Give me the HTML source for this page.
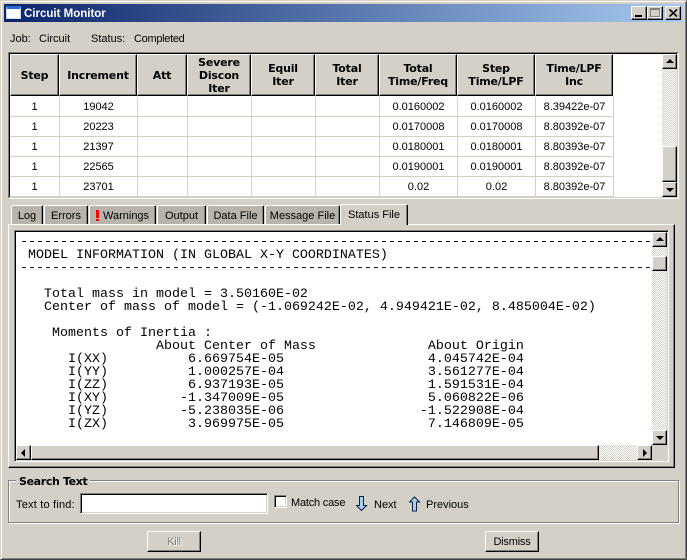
<!DOCTYPE html>
<html><head><meta charset="utf-8"><style>
html,body{margin:0;padding:0;background:#d4d0c8}
#w{position:relative;width:687px;height:560px;overflow:hidden;background:#d4d0c8;font:11px "Liberation Sans",sans-serif;color:#000}
#w div,#w span.a{position:absolute;box-sizing:border-box}
.t{white-space:nowrap;line-height:13px}
.btn{background:#d4d0c8;border-top:1px solid #fff;border-left:1px solid #fff;border-right:1px solid #000;border-bottom:1px solid #000;box-shadow:inset -1px -1px 0 #808080}
.dither{background:repeating-conic-gradient(#d4d0c8 0 25%,#fff 0 50%) 0 0/2px 2px}
.hc{background:#d4d0c8;border-top:1px solid #fff;border-left:1px solid #fff;border-right:1px solid #000;border-bottom:1px solid #000;box-shadow:inset -1px -1px 0 #808080;font:bold 11px/13px "DejaVu Sans",sans-serif;text-align:center;display:flex;align-items:center;justify-content:center;letter-spacing:-.2px}
.cell{background:#fff;border-right:1px solid #d4d0c8;border-bottom:1px solid #d4d0c8;text-align:center;line-height:21px;font-size:11px}
.tab{background:#b8b4ac;border-top:1px solid #fff;border-left:1px solid #fff;border-right:1px solid #000;box-shadow:inset -1px 0 0 #808080;border-radius:2px 2px 0 0;text-align:center;line-height:21px;font-size:11px;white-space:nowrap}
pre{position:absolute;margin:0;left:20px;top:236px;font:13.33px/13px "Liberation Mono",monospace;color:#000;white-space:pre}
.up:after,.dn:after,.lf:after,.rt:after{content:"";position:absolute;width:0;height:0}
.up:after{left:3px;top:4px;border:4px solid transparent;border-top:0;border-bottom:4px solid #000}
.dn:after{left:3px;top:5px;border:4px solid transparent;border-bottom:0;border-top:4px solid #000}
.lf:after{left:4px;top:3px;border:4px solid transparent;border-left:0;border-right:4px solid #000}
.rt:after{left:5px;top:3px;border:4px solid transparent;border-right:0;border-left:4px solid #000}
</style></head><body><div id="w">
<!-- window frame -->
<div style="left:0;top:0;width:687px;height:560px;border-top:1px solid #d4d0c8;border-left:1px solid #d4d0c8;border-right:1px solid #404040;border-bottom:1px solid #404040;box-shadow:inset 1px 1px 0 #fff,inset -1px -1px 0 #808080"></div>
<!-- title bar -->
<div style="left:4px;top:4px;width:679px;height:18px;background:linear-gradient(90deg,#0a246a,#a6caf0)"></div>
<div style="left:6px;top:6px;width:15px;height:13px;background:#fff;border:1px solid #c8d8f0;border-top:3px solid #2a6ad0"></div>
<div class="t" style="left:24px;top:7px;color:#fff;font:bold 11.5px/14px 'Liberation Sans',sans-serif">Circuit Monitor</div>
<div class="btn" style="left:631px;top:6px;width:16px;height:14px"><div style="left:3px;top:8px;width:7px;height:2px;background:#000"></div></div>
<div class="btn" style="left:647px;top:6px;width:16px;height:14px"><div style="left:2px;top:1px;width:10px;height:9px;border:1px solid #808080;border-top:2px solid #808080;box-shadow:1px 1px 0 #fff"></div></div>
<div class="btn" style="left:665px;top:6px;width:16px;height:14px"><svg style="position:absolute;left:3px;top:2px" width="9" height="8"><path d="M0.5 0.5L8 7.5M8 0.5L0.5 7.5" stroke="#000" stroke-width="1.6" fill="none"/></svg></div>
<!-- job line -->
<div class="t" style="left:10px;top:33px">Job:</div>
<div class="t" style="left:39px;top:33px">Circuit</div>
<div class="t" style="left:91px;top:33px">Status:</div>
<div class="t" style="left:134px;top:33px;letter-spacing:-.3px">Completed</div>
<!-- table frame -->
<div style="left:8px;top:52px;width:671px;height:147px;background:#fff;border-top:1px solid #808080;border-left:1px solid #808080;border-right:1px solid #fff;border-bottom:1px solid #fff;box-shadow:inset -1px -1px 0 #d4d0c8,inset 1px 1px 0 #000"></div>
<div class="hc" style="left:10px;top:54px;width:49px;height:42px">Step</div>
<div class="hc" style="left:59px;top:54px;width:78px;height:42px">Increment</div>
<div class="hc" style="left:137px;top:54px;width:50px;height:42px">Att</div>
<div class="hc" style="left:187px;top:54px;width:64px;height:42px">Severe<br>Discon<br>Iter</div>
<div class="hc" style="left:251px;top:54px;width:64px;height:42px">Equil<br>Iter</div>
<div class="hc" style="left:315px;top:54px;width:64px;height:42px">Total<br>Iter</div>
<div class="hc" style="left:379px;top:54px;width:78px;height:42px">Total<br>Time/Freq</div>
<div class="hc" style="left:457px;top:54px;width:78px;height:42px">Step<br>Time/LPF</div>
<div class="hc" style="left:535px;top:54px;width:78px;height:42px">Time/LPF<br>Inc</div>
<!-- rows -->
<div class="cell" style="left:10px;top:97px;width:50px;height:20px">1</div><div class="cell" style="left:60px;top:97px;width:78px;height:20px">19042</div><div class="cell" style="left:138px;top:97px;width:50px;height:20px"></div><div class="cell" style="left:188px;top:97px;width:64px;height:20px"></div><div class="cell" style="left:252px;top:97px;width:64px;height:20px"></div><div class="cell" style="left:316px;top:97px;width:64px;height:20px"></div><div class="cell" style="left:380px;top:97px;width:78px;height:20px">0.0160002</div><div class="cell" style="left:458px;top:97px;width:78px;height:20px">0.0160002</div><div class="cell" style="left:536px;top:97px;width:78px;height:20px">8.39422e-07</div>
<div class="cell" style="left:10px;top:117px;width:50px;height:20px">1</div><div class="cell" style="left:60px;top:117px;width:78px;height:20px">20223</div><div class="cell" style="left:138px;top:117px;width:50px;height:20px"></div><div class="cell" style="left:188px;top:117px;width:64px;height:20px"></div><div class="cell" style="left:252px;top:117px;width:64px;height:20px"></div><div class="cell" style="left:316px;top:117px;width:64px;height:20px"></div><div class="cell" style="left:380px;top:117px;width:78px;height:20px">0.0170008</div><div class="cell" style="left:458px;top:117px;width:78px;height:20px">0.0170008</div><div class="cell" style="left:536px;top:117px;width:78px;height:20px">8.80392e-07</div>
<div class="cell" style="left:10px;top:137px;width:50px;height:20px">1</div><div class="cell" style="left:60px;top:137px;width:78px;height:20px">21397</div><div class="cell" style="left:138px;top:137px;width:50px;height:20px"></div><div class="cell" style="left:188px;top:137px;width:64px;height:20px"></div><div class="cell" style="left:252px;top:137px;width:64px;height:20px"></div><div class="cell" style="left:316px;top:137px;width:64px;height:20px"></div><div class="cell" style="left:380px;top:137px;width:78px;height:20px">0.0180001</div><div class="cell" style="left:458px;top:137px;width:78px;height:20px">0.0180001</div><div class="cell" style="left:536px;top:137px;width:78px;height:20px">8.80393e-07</div>
<div class="cell" style="left:10px;top:157px;width:50px;height:20px">1</div><div class="cell" style="left:60px;top:157px;width:78px;height:20px">22565</div><div class="cell" style="left:138px;top:157px;width:50px;height:20px"></div><div class="cell" style="left:188px;top:157px;width:64px;height:20px"></div><div class="cell" style="left:252px;top:157px;width:64px;height:20px"></div><div class="cell" style="left:316px;top:157px;width:64px;height:20px"></div><div class="cell" style="left:380px;top:157px;width:78px;height:20px">0.0190001</div><div class="cell" style="left:458px;top:157px;width:78px;height:20px">0.0190001</div><div class="cell" style="left:536px;top:157px;width:78px;height:20px">8.80392e-07</div>
<div class="cell" style="left:10px;top:177px;width:50px;height:20px">1</div><div class="cell" style="left:60px;top:177px;width:78px;height:20px">23701</div><div class="cell" style="left:138px;top:177px;width:50px;height:20px"></div><div class="cell" style="left:188px;top:177px;width:64px;height:20px"></div><div class="cell" style="left:252px;top:177px;width:64px;height:20px"></div><div class="cell" style="left:316px;top:177px;width:64px;height:20px"></div><div class="cell" style="left:380px;top:177px;width:78px;height:20px">0.02</div><div class="cell" style="left:458px;top:177px;width:78px;height:20px">0.02</div><div class="cell" style="left:536px;top:177px;width:78px;height:20px">8.80392e-07</div>
<!-- table scrollbar -->
<div class="dither" style="left:662px;top:54px;width:15px;height:143px"></div>
<div class="btn up" style="left:662px;top:54px;width:15px;height:15px"></div>
<div class="btn" style="left:662px;top:146px;width:15px;height:36px"></div>
<div class="btn dn" style="left:662px;top:182px;width:15px;height:15px"></div>
<!-- tab panel -->
<div style="left:8px;top:224px;width:667px;height:244px;background:#d4d0c8;border-top:1px solid #fff;border-left:1px solid #fff;border-right:1px solid #000;border-bottom:1px solid #000;box-shadow:inset -1px -1px 0 #808080"></div>
<div class="tab" style="left:11px;top:205px;width:32px;height:19px">Log</div>
<div class="tab" style="left:44px;top:205px;width:44px;height:19px">Errors</div>
<div class="tab" style="left:89px;top:205px;width:67px;height:19px;text-align:left;padding-left:13px">Warnings<div style="left:6px;top:4px;width:3px;height:8px;background:#f00"></div><div style="left:6px;top:13px;width:3px;height:2px;background:#f00"></div></div>
<div class="tab" style="left:157px;top:205px;width:49px;height:19px">Output</div>
<div class="tab" style="left:207px;top:205px;width:57px;height:19px">Data File</div>
<div class="tab" style="left:265px;top:205px;width:75px;height:19px">Message File</div>
<div class="tab" style="left:340px;top:204px;width:68px;height:21px;background:#d4d0c8;line-height:21px">Status File</div>
<!-- text area -->
<div style="left:14px;top:230px;width:655px;height:232px;background:#fff;border-top:1px solid #808080;border-left:1px solid #808080;border-right:1px solid #fff;border-bottom:1px solid #fff;box-shadow:inset 1px 1px 0 #000"></div>
<pre>-------------------------------------------------------------------------------
 MODEL INFORMATION (IN GLOBAL X-Y COORDINATES)
-------------------------------------------------------------------------------

   Total mass in model = 3.50160E-02
   Center of mass of model = (-1.069242E-02, 4.949421E-02, 8.485004E-02)

    Moments of Inertia :
                 About Center of Mass              About Origin
      I(XX)          6.669754E-05                  4.045742E-04
      I(YY)          1.000257E-04                  3.561277E-04
      I(ZZ)          6.937193E-05                  1.591531E-04
      I(XY)         -1.347009E-05                  5.060822E-06
      I(YZ)         -5.238035E-06                 -1.522908E-04
      I(ZX)          3.969975E-05                  7.146809E-05</pre>
<!-- text vscroll -->
<div class="dither" style="left:652px;top:232px;width:15px;height:212px"></div>
<div style="left:667px;top:232px;width:1px;height:229px;background:#d4d0c8"></div>
<div class="btn up" style="left:652px;top:232px;width:15px;height:15px"></div>
<div class="btn" style="left:652px;top:256px;width:15px;height:15px"></div>
<div class="btn dn" style="left:652px;top:430px;width:15px;height:15px"></div>
<!-- text hscroll -->
<div class="dither" style="left:16px;top:445px;width:636px;height:15px"></div>
<div style="left:652px;top:445px;width:16px;height:16px;background:#d4d0c8"></div>
<div style="left:16px;top:460px;width:652px;height:1px;background:#d4d0c8"></div>
<div class="btn lf" style="left:16px;top:445px;width:15px;height:15px"></div>
<div class="btn" style="left:31px;top:445px;width:568px;height:15px"></div>
<div class="btn rt" style="left:637px;top:445px;width:15px;height:15px"></div>
<!-- search group -->
<div style="left:8px;top:480px;width:671px;height:43px;border:1px solid #808080;box-shadow:1px 1px 0 #fff,inset 1px 1px 0 #fff"></div>
<div class="t" style="left:16px;top:475px;padding:0 3px;background:#d4d0c8;font:bold 11px/14px 'DejaVu Sans',sans-serif;letter-spacing:-.35px">Search Text</div>
<div class="t" style="left:16px;top:499px;letter-spacing:.2px">Text to find:</div>
<div style="left:80px;top:493px;width:188px;height:21px;background:#fff;border-top:1px solid #808080;border-left:1px solid #808080;border-right:1px solid #fff;border-bottom:1px solid #fff;box-shadow:inset 1px 1px 0 #000,inset -1px -1px 0 #d4d0c8"></div>
<div style="left:274px;top:495px;width:13px;height:13px;background:#fff;border-top:1px solid #808080;border-left:1px solid #808080;border-right:1px solid #fff;border-bottom:1px solid #fff;box-shadow:inset 1px 1px 0 #000,inset -1px -1px 0 #d4d0c8"></div>
<div class="t" style="left:291px;top:497px;letter-spacing:-.2px">Match case</div>
<svg style="position:absolute;left:356px;top:496px" width="12" height="16"><path d="M3.5 .5H7.5V9.5H10.5L5.5 14.5L.5 9.5H3.5Z" fill="#a6d0f0" stroke="#102040"/></svg>
<div class="t" style="left:374px;top:499px">Next</div>
<svg style="position:absolute;left:409px;top:496px" width="12" height="16"><path d="M3.5 15V6H.5L5.5 1L10.5 6H7.5V15Z" fill="#a6d0f0" stroke="#102040"/></svg>
<div class="t" style="left:426px;top:499px">Previous</div>
<!-- bottom buttons -->
<div class="btn" style="left:147px;top:531px;width:54px;height:21px;text-align:center;line-height:20px;color:#808080;text-shadow:1px 1px 0 #fff;letter-spacing:-.3px">Kill</div>
<div class="btn" style="left:485px;top:531px;width:54px;height:21px;text-align:center;line-height:20px;letter-spacing:-.2px">Dismiss</div>
</div></body></html>
